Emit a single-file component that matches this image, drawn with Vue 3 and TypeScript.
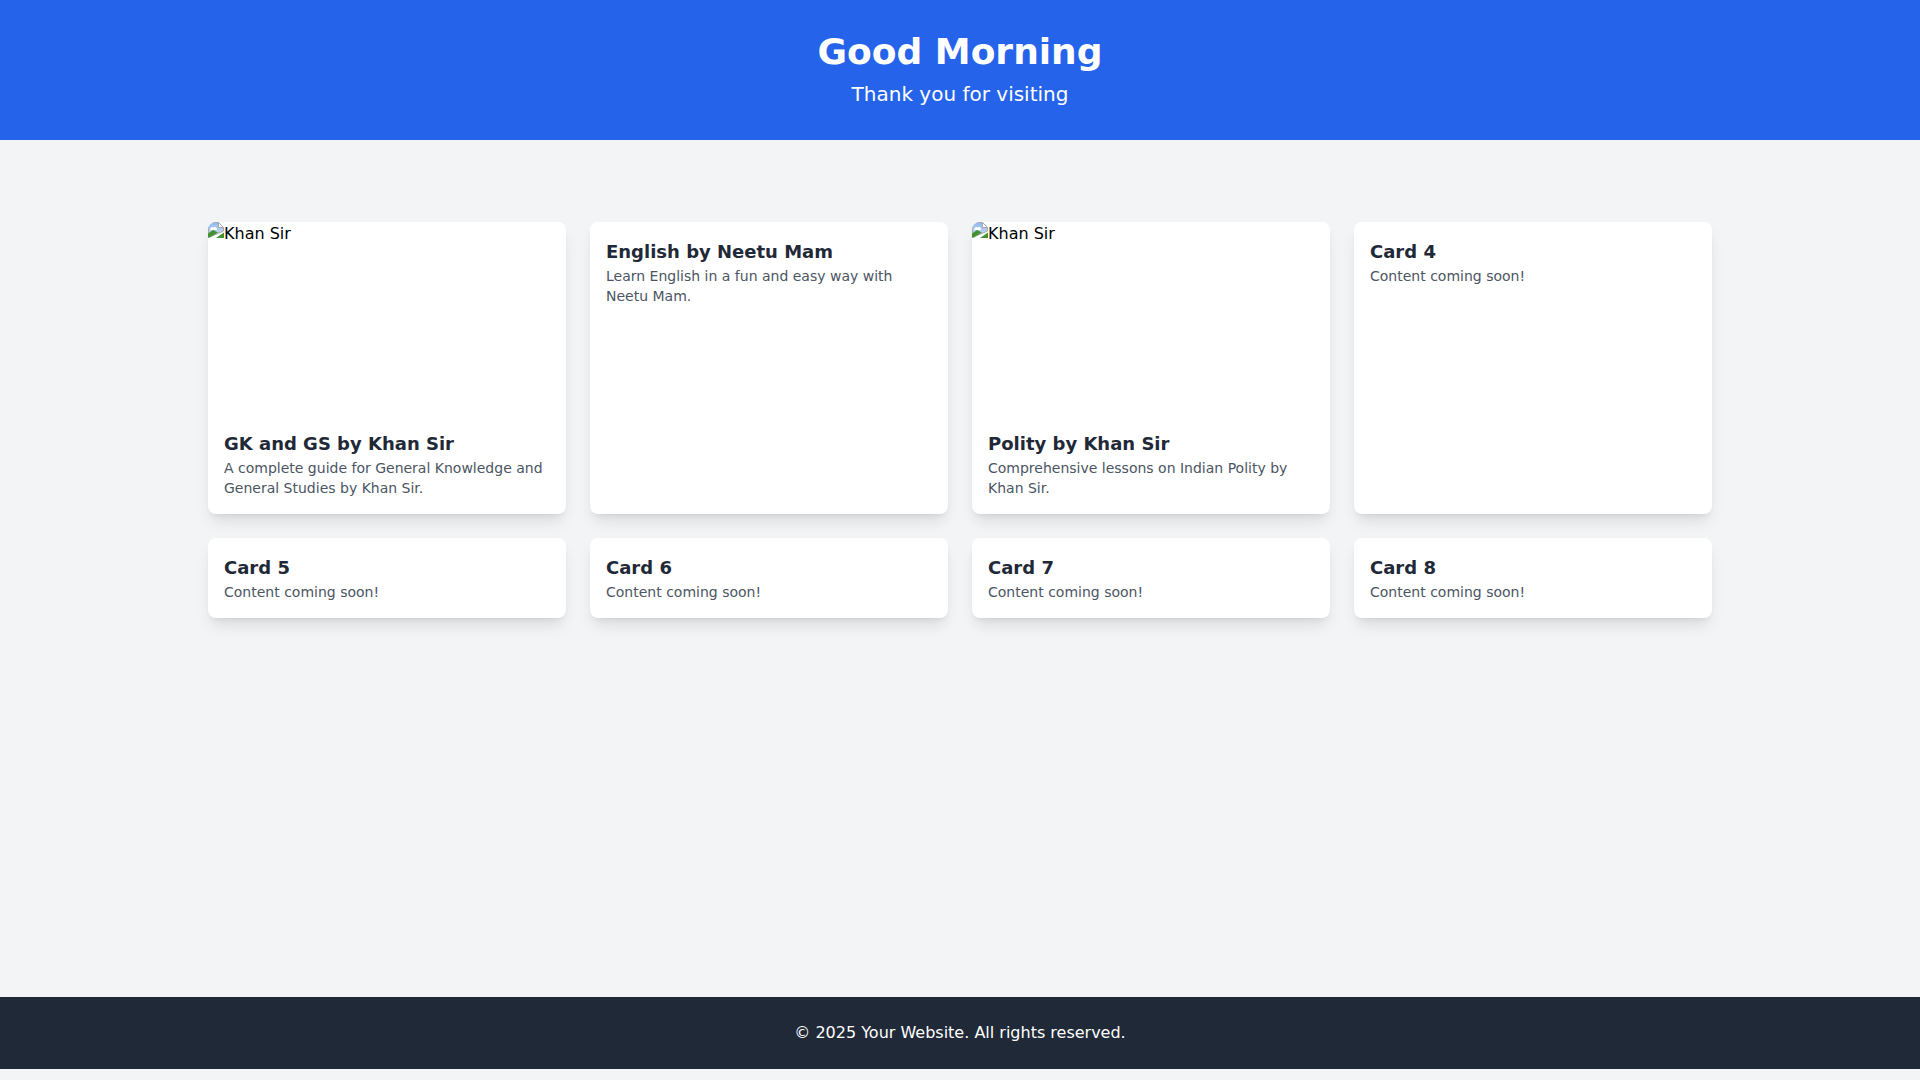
<script setup lang="ts">
interface Card {
  title: string
  text: string
  alt?: string
}

const cards: Card[] = [
  { title: 'GK and GS by Khan Sir', text: 'A complete guide for General Knowledge and General Studies by Khan Sir.', alt: 'Khan Sir' },
  { title: 'English by Neetu Mam', text: 'Learn English in a fun and easy way with Neetu Mam.' },
  { title: 'Polity by Khan Sir', text: 'Comprehensive lessons on Indian Polity by Khan Sir.', alt: 'Khan Sir' },
  { title: 'Card 4', text: 'Content coming soon!' },
  { title: 'Card 5', text: 'Content coming soon!' },
  { title: 'Card 6', text: 'Content coming soon!' },
  { title: 'Card 7', text: 'Content coming soon!' },
  { title: 'Card 8', text: 'Content coming soon!' },
]
</script>

<template>
  <header class="hero">
    <h1>Good Morning</h1>
    <p>Thank you for visiting</p>
  </header>

  <main class="content">
    <div class="grid">
      <article v-for="card in cards" :key="card.title" class="card">
        <div v-if="card.alt" class="card__image">
          <svg class="broken" width="16" height="16" viewBox="0 0 16 16" aria-hidden="true">
            <defs>
              <linearGradient id="sky" x1="0" y1="0" x2="0" y2="1">
                <stop offset="0" stop-color="#8fb8ee" />
                <stop offset="1" stop-color="#d4e3f9" />
              </linearGradient>
            </defs>
            <path d="M0.5 0.5H10.5L15.5 5.5V9L0.5 15.5Z" fill="url(#sky)" stroke="#a8a8a8" stroke-width="1" />
            <path d="M10.5 0.5V5.5H15.5Z" fill="#fff" stroke="#a8a8a8" stroke-width="1" />
            <path d="M2.5 6.5C3 5 4.5 4.5 5.5 5.5C6.5 4.5 8.5 5 9 6.5C9.5 7.5 8 8 7 8H4C2.5 8 2 7.5 2.5 6.5Z" fill="#fff" />
            <path d="M0 11.5L5 8L10 10.5L1.5 15.5H0Z" fill="#43922f" />
            <path d="M8 16L16 10.5V16Z" fill="#43922f" />
          </svg>Khan Sir
        </div>
        <div class="card__body">
          <h2>{{ card.title }}</h2>
          <p>{{ card.text }}</p>
        </div>
      </article>
    </div>
  </main>

  <footer class="footer">
    <p>© 2025 Your Website. All rights reserved.</p>
  </footer>
</template>

<style>
body {
  background: #f3f4f6;
  font-family: "DejaVu Sans", sans-serif;
}
</style>

<style scoped>
.hero {
  padding: 32px;
  background: #2563eb;
  color: #fff;
  text-align: center;
}

.hero h1 {
  margin: 0;
  font-size: 36px;
  line-height: 40px;
  font-weight: 700;
}

.hero p {
  margin: 8px 0 0;
  font-size: 20px;
  line-height: 28px;
}

.content {
  box-sizing: border-box;
  min-height: 857px;
  padding: 82px 16px 0;
}

.grid {
  display: grid;
  grid-template-columns: repeat(4, minmax(0, 1fr));
  align-items: stretch;
  gap: 24px;
  max-width: 1504px;
  margin: 0 auto;
}

.card {
  overflow: hidden;
  border-radius: 8px;
  background: #fff;
  box-shadow: 0 10px 15px -3px rgba(0, 0, 0, 0.1), 0 4px 6px -4px rgba(0, 0, 0, 0.1);
}

.card__image {
  height: 192px;
  color: #000;
  font-size: 16px;
  line-height: 24px;
}

.broken {
  vertical-align: top;
}

.card__body {
  padding: 16px;
}

.card__body h2 {
  margin: 0;
  color: #1f2937;
  font-size: 18px;
  line-height: 28px;
  font-weight: 700;
}

.card__body p {
  margin: 0;
  color: #4b5563;
  font-size: 14px;
  line-height: 20px;
}

.footer {
  padding: 24px;
  background: #1f2937;
  color: #fff;
  text-align: center;
}

.footer p {
  margin: 0;
  font-size: 16px;
  line-height: 24px;
}
</style>
